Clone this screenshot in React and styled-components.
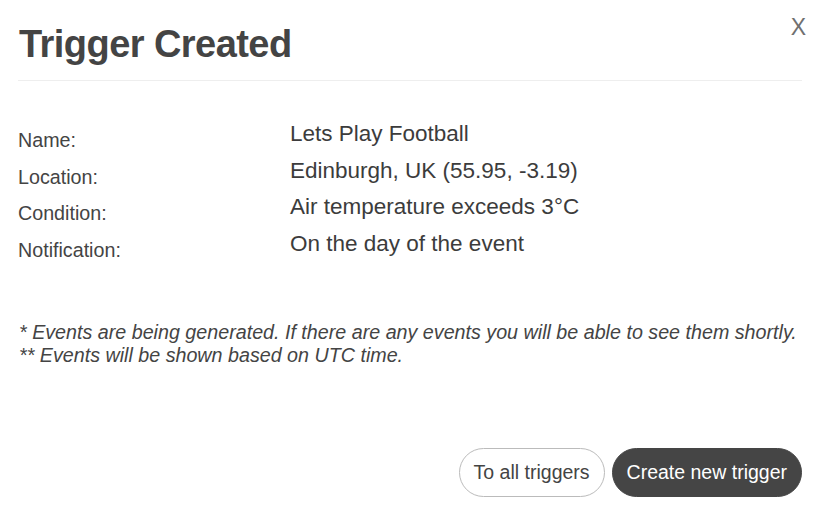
import React from "react";
import styled, { createGlobalStyle } from "styled-components";

const GlobalStyle = createGlobalStyle`
  html, body {
    margin: 0;
    padding: 0;
    background: #fff;
  }
  body {
    font-family: "Liberation Sans", Arial, sans-serif;
    color: #444;
  }
`;

const Modal = styled.div`
  position: relative;
  width: 820px;
  height: 514px;
  box-sizing: border-box;
  padding: 0 18px;
  display: flex;
  flex-direction: column;
`;

const Header = styled.div`
  padding: 22px 0 14px 1px;
  border-bottom: 1px solid #eee;
`;

const Title = styled.h1`
  margin: 0;
  font-size: 38px;
  line-height: 44px;
  font-weight: bold;
  letter-spacing: -0.55px;
  color: #444;
`;

const CloseBtn = styled.button`
  position: absolute;
  top: 16px;
  right: 14px;
  padding: 0;
  border: none;
  background: none;
  font-family: "Liberation Sans", Arial, sans-serif;
  font-size: 23px;
  line-height: 22px;
  color: #707070;
  cursor: pointer;
`;

const Details = styled.div`
  margin-top: 35px;
  display: grid;
  grid-template-columns: 272px 1fr;
  grid-auto-rows: 36.7px;
`;

const Label = styled.div`
  padding-top: 6px;
  font-size: 19.7px;
  line-height: 36px;
  color: #444;
`;

const Value = styled.div`
  font-size: 22.5px;
  line-height: 36px;
  color: #3c3c3c;
`;

const Notes = styled.div`
  margin-top: 58px;
  padding-left: 1px;
  font-size: 19.7px;
  line-height: 23px;
  font-style: italic;
  color: #444;
`;

const Actions = styled.div`
  margin-top: 81px;
  display: flex;
  justify-content: flex-end;
  gap: 7px;
`;

const PillButton = styled.button`
  height: 49px;
  padding: 0 14px;
  border-radius: 25px;
  border: 1px solid ${(p) => (p.$primary ? "#454545" : "#bbb")};
  background: ${(p) => (p.$primary ? "#454545" : "#fff")};
  color: ${(p) => (p.$primary ? "#fff" : "#444")};
  font-family: "Liberation Sans", Arial, sans-serif;
  font-size: 19.5px;
  cursor: pointer;
`;

const details = [
  ["Name:", "Lets Play Football"],
  ["Location:", "Edinburgh, UK (55.95, -3.19)"],
  ["Condition:", "Air temperature exceeds 3°C"],
  ["Notification:", "On the day of the event"],
];

export default function App() {
  return (
    <>
      <GlobalStyle />
      <Modal>
        <CloseBtn>X</CloseBtn>
        <Header>
          <Title>Trigger Created</Title>
        </Header>
        <Details>
          {details.map(([label, value]) => (
            <React.Fragment key={label}>
              <Label>{label}</Label>
              <Value>{value}</Value>
            </React.Fragment>
          ))}
        </Details>
        <Notes>
          <div>
            * Events are being generated. If there are any events you will be
            able to see them shortly.
          </div>
          <div>** Events will be shown based on UTC time.</div>
        </Notes>
        <Actions>
          <PillButton>To all triggers</PillButton>
          <PillButton $primary>Create new trigger</PillButton>
        </Actions>
      </Modal>
    </>
  );
}
